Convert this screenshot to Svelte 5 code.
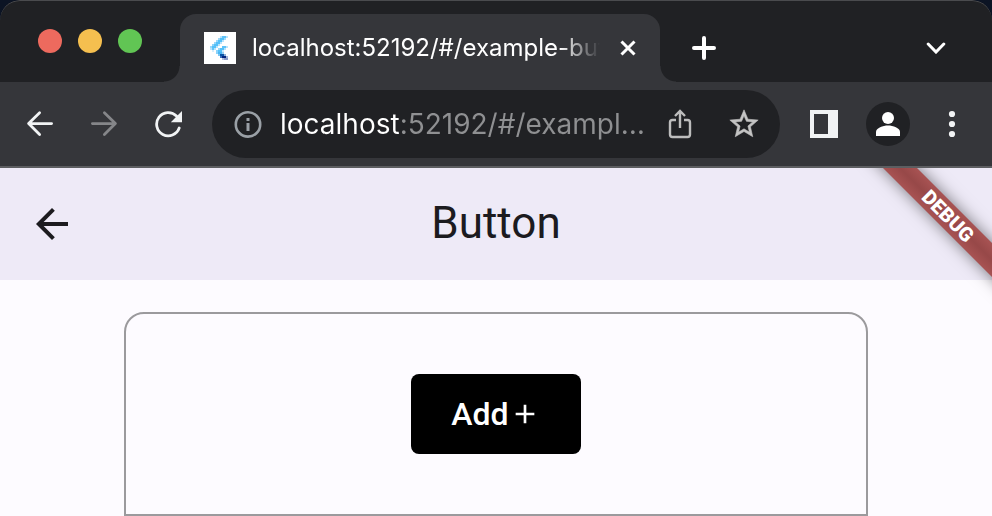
<script>
  const tabTitle = 'localhost:52192/#/example-button';
  let address = $state('localhost:52192/#/example-button');

  // Favicon cells on a 16 x 16 grid: [x, y, width, fill]
  const faviconCells = [
    [8, 2, 1, '#b9e3fb'], [9, 2, 2, '#5fc3f8'], [11, 2, 1, '#b9e3fb'],
    [7, 3, 1, '#9ad8fa'], [8, 3, 2, '#54c0f8'], [10, 3, 1, '#a6dcfa'],
    [6, 4, 1, '#9ad8fa'], [7, 4, 2, '#54c0f8'], [9, 4, 1, '#b9e3fb'],
    [5, 5, 1, '#9ad8fa'], [6, 5, 2, '#54c0f8'], [8, 5, 1, '#b9e3fb'],
    [4, 6, 1, '#8bd3fa'], [5, 6, 2, '#54c0f8'], [7, 6, 1, '#b9e3fb'],
    [3, 7, 1, '#9ad8fa'], [4, 7, 2, '#54c0f8'], [6, 7, 1, '#b9e3fb'],
    [9, 7, 2, '#5fc3f8'], [11, 7, 1, '#b9e3fb'],
    [3, 8, 1, '#b9e3fb'], [4, 8, 1, '#62c4f8'], [5, 8, 1, '#b9e3fb'],
    [7, 8, 1, '#9ad8fa'], [8, 8, 2, '#54c0f8'], [10, 8, 1, '#b9e3fb'],
    [4, 9, 1, '#d6effd'], [6, 9, 1, '#8bd3fa'], [7, 9, 2, '#54c0f8'], [9, 9, 1, '#c5e8fc'],
    [6, 10, 1, '#8bd3fa'], [7, 10, 2, '#4ab6f2'], [9, 10, 1, '#9bd0f3'],
    [7, 11, 1, '#7dc8f5'], [8, 11, 2, '#0b53a5'], [10, 11, 1, '#8fb0d8'],
    [8, 12, 1, '#3b6db5'], [9, 12, 2, '#02247f'], [11, 12, 1, '#9fb2d5'],
    [9, 13, 1, '#b5bfdb'], [10, 13, 2, '#8b9bc8']
  ];
</script>

<div class="window">
  <header class="tabstrip">
    <div class="lights">
      <button class="light red" aria-label="Close window"></button>
      <button class="light yellow" aria-label="Minimize window"></button>
      <button class="light green" aria-label="Zoom window"></button>
    </div>
    <div class="tab">
      <svg class="favicon" viewBox="0 0 16 16" shape-rendering="crispEdges" aria-hidden="true">
        <rect width="16" height="16" fill="#fff" />
        {#each faviconCells as [x, y, w, fill]}
          <rect {x} {y} width={w} height="1" {fill} />
        {/each}
      </svg>
      <span class="tab-title">{tabTitle}</span>
      <button class="tab-close" aria-label="Close tab">
        <svg width="16" height="16" viewBox="0 0 16 16"><path d="M1.5 1.5l13 13M14.5 1.5l-13 13" stroke="#fff" stroke-width="3" /></svg>
      </button>
    </div>
    <button class="new-tab" aria-label="New tab">
      <svg width="24" height="24" viewBox="0 0 24 24"><path d="M12 2v20M2 12h20" stroke="#fff" stroke-width="4" stroke-linecap="round" /></svg>
    </button>
    <button class="tab-search" aria-label="Search tabs">
      <svg width="20" height="12" viewBox="0 0 20 12"><path d="M2.2 2l7.8 8 7.8-8" fill="none" stroke="#fff" stroke-width="3" stroke-linecap="round" /></svg>
    </button>
  </header>

  <nav class="toolbar">
    <button class="tool" aria-label="Back">
      <svg width="28" height="28" viewBox="0 0 28 28"><path d="M25.6 13.6H3M13.6 2.8L2.6 13.6l11 10.8" fill="none" stroke="#f1f3f4" stroke-width="2.8" stroke-linecap="round" stroke-linejoin="round" /></svg>
    </button>
    <button class="tool" aria-label="Forward">
      <svg width="28" height="28" viewBox="0 0 28 28"><path d="M2.4 13.6H25M14.4 2.8l11 10.8-11 10.8" fill="none" stroke="#858689" stroke-width="2.8" stroke-linecap="round" stroke-linejoin="round" /></svg>
    </button>
    <button class="tool" aria-label="Reload">
      <svg width="28" height="28" viewBox="0 0 28 28"><path d="M25.2 18A11.6 11.6 0 1 1 22.5 6" fill="none" stroke="#f1f3f4" stroke-width="2.8" stroke-linecap="round" /><path d="M28 1v11.2H16.8z" fill="#f1f3f4" /></svg>
    </button>

    <div class="omnibox">
      <svg width="28" height="28" viewBox="0 0 28 28" aria-hidden="true"><circle cx="14" cy="14.4" r="12.2" fill="none" stroke="#9aa0a6" stroke-width="2.6" /><path d="M12.5 8h3v3h-3zM12.5 13h3v8h-3z" fill="#9aa0a6" /></svg>
      <input type="text" aria-label="Address" bind:value={address} />
      <button class="tool" aria-label="Share">
        <svg width="24" height="30" viewBox="0 0 24 30"><path d="M8 11H4.500q-2.500 0-2.500 2.500v12q0 2.500 2.500 2.500h15q2.500 0 2.500-2.500v-12q0-2.500-2.500-2.500H16M12 19V2.500M7 7l5-5 5 5" fill="none" stroke="#bdbdbd" stroke-width="2.4" /></svg>
      </button>
      <button class="tool" aria-label="Bookmark this tab">
        <svg width="34" height="34" viewBox="0 0 24 24"><path fill="#c4c4c4" stroke="#c4c4c4" stroke-width=".4" d="M22 9.240l-7.190-.620L12 2 9.190 8.630 2 9.240l5.460 4.730L5.820 21 12 17.270 18.180 21l-1.630-7.030L22 9.240zM12 15.400l-3.760 2.270 1-4.280-3.320-2.880 4.380-.380L12 6.100l1.710 4.040 4.380.380-3.320 2.880 1 4.280L12 15.400z" /></svg>
      </button>
    </div>

    <button class="tool" aria-label="Side panel">
      <svg width="28" height="28" viewBox="0 0 28 28"><path fill-rule="evenodd" fill="#f1f3f4" d="M0 0h28v28H0zM4 4v20h14V4z" /></svg>
    </button>
    <button class="tool" aria-label="Profile">
      <svg width="44" height="44" viewBox="0 0 44 44"><circle cx="22" cy="22" r="22" fill="#202124" /><circle cx="22" cy="16" r="6" fill="#fff" /><path d="M10 34v-4c0-4 7-6.500 12-6.500S34 26 34 30v4z" fill="#fff" /></svg>
    </button>
    <button class="tool" aria-label="Menu">
      <svg width="8" height="28" viewBox="0 0 8 28"><g fill="#f1f3f4"><circle cx="4" cy="4" r="3.100" /><circle cx="4" cy="14" r="3.100" /><circle cx="4" cy="24" r="3.100" /></g></svg>
    </button>
  </nav>

  <main class="page">
    <div class="appbar">
      <button class="page-back" aria-label="Back">
        <svg width="48" height="48" viewBox="0 0 24 24"><path d="M20 11H7.830l5.590-5.590L12 4l-8 8 8 8 1.410-1.410L7.830 13H20z" fill="#1c1b1f" /></svg>
      </button>
      <h1>Button</h1>
    </div>
    <section class="card">
      <button class="add">
        Add
        <svg width="32" height="32" viewBox="0 0 24 24" aria-hidden="true"><path d="M19 13h-6v6h-2v-6H5v-2h6V5h2v6h6z" fill="#fff" /></svg>
      </button>
    </section>
    <div class="debug">DEBUG</div>
  </main>
</div>

<style>
  :global(body) {
    margin: 0;
    background: #0c1424;
  }

  .window {
    display: flex;
    flex-direction: column;
    min-height: 100vh;
    border-radius: 20px 20px 0 0;
    overflow: hidden;
    font-family: Inter, 'Liberation Sans', sans-serif;
  }

  button {
    display: flex;
    align-items: center;
    justify-content: center;
    margin: 0;
    padding: 0;
    border: 0;
    background: none;
    cursor: pointer;
  }

  svg {
    display: block;
    flex: none;
  }

  .tabstrip {
    display: flex;
    align-items: center;
    height: 82px;
    box-sizing: border-box;
    padding: 14px 24px 0 38px;
    background: #202124;
    border-radius: 20px 20px 0 0;
    box-shadow: inset 0 1px 0 #4a4b4e;
  }

  .lights {
    display: flex;
    gap: 16px;
    margin-right: 38px;
    padding-bottom: 14px;
  }

  .light {
    width: 24px;
    height: 24px;
    border-radius: 50%;
  }

  .red { background: #ed6a5e; }
  .yellow { background: #f5bf4f; }
  .green { background: #61c554; }

  .tab {
    position: relative;
    display: flex;
    align-items: center;
    gap: 16px;
    flex: 0 1 480px;
    min-width: 0;
    height: 68px;
    box-sizing: border-box;
    padding: 0 24px;
    background: #35363a;
    border-radius: 16px 16px 0 0;
  }

  /* Concave feet where the tab joins the toolbar */
  .tab::before,
  .tab::after {
    content: '';
    position: absolute;
    bottom: 0;
    width: 16px;
    height: 16px;
  }

  .tab::before {
    right: 100%;
    background: radial-gradient(circle at 0 0, transparent 15px, #35363a 16px);
  }

  .tab::after {
    left: 100%;
    background: radial-gradient(circle at 100% 0, transparent 15px, #35363a 16px);
  }

  .favicon {
    width: 32px;
    height: 32px;
  }

  .tab-title {
    flex: 1;
    min-width: 0;
    overflow: hidden;
    white-space: nowrap;
    color: #fff;
    font-size: 24px;
    line-height: 32px;
    mask-image: linear-gradient(to right, #000 calc(100% - 44px), transparent calc(100% - 4px));
  }

  .new-tab {
    margin-left: 32px;
  }

  .tab-search {
    width: 64px;
    height: 40px;
    margin-left: auto;
  }

  .toolbar {
    display: flex;
    align-items: center;
    height: 86px;
    box-sizing: border-box;
    padding: 0 8px;
    background: #35363a;
    border-bottom: 2px solid #5d5e61;
  }

  .tool {
    flex: none;
    width: 64px;
    height: 64px;
  }

  .omnibox {
    display: flex;
    align-items: center;
    flex: 1;
    min-width: 0;
    height: 68px;
    box-sizing: border-box;
    margin: 0 12px;
    padding: 0 4px 0 22px;
    background: #202124;
    border-radius: 34px;
  }

  .omnibox input {
    flex: 1;
    min-width: 0;
    margin: 0 0 0 18px;
    padding: 0;
    border: 0;
    outline: 0;
    font: 28px/36px Inter, 'Liberation Sans', sans-serif;
    text-overflow: ellipsis;
    color: transparent;
    caret-color: #fff;
    /* Host name in white, the rest of the address dimmed */
    background: linear-gradient(to right, #fff 120px, #8f9092 120px);
    background-clip: text;
  }

  .page {
    position: relative;
    flex: 1;
    overflow: hidden;
    background: #fdfbff;
    font-family: Roboto, sans-serif;
  }

  .appbar {
    display: grid;
    grid-template-columns: 96px 1fr 96px;
    align-items: center;
    height: 112px;
    background: #eeeaf7;
  }

  .page-back {
    margin-left: 8px;
  }

  h1 {
    margin: 0;
    padding-bottom: 2px;
    text-align: center;
    font-size: 44px;
    font-weight: 400;
    line-height: 56px;
    color: #1c1b1f;
  }

  .card {
    display: flex;
    justify-content: center;
    width: 75%;
    box-sizing: border-box;
    margin: 32px auto 0;
    padding: 60px 24px;
    border: 2px solid #9b9a9d;
    border-radius: 20px 20px 0 0;
  }

  .add {
    height: 80px;
    padding: 0 40px;
    border-radius: 8px;
    background: #000;
    color: #fff;
    font: 500 32px/40px Roboto, sans-serif;
  }

  .debug {
    position: absolute;
    top: 36px;
    right: -56px;
    width: 200px;
    transform: rotate(45deg);
    background: linear-gradient(#a85353, #974848, #a85353);
    box-shadow: 0 0 16px rgba(0, 0, 0, 0.5);
    color: #fff;
    font-size: 20px;
    font-weight: 900;
    line-height: 24px;
    text-align: center;
  }
</style>
